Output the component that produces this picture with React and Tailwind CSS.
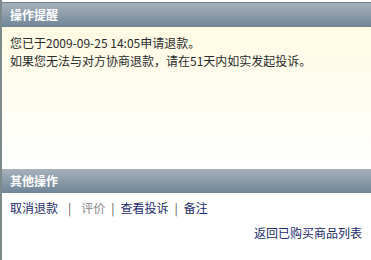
export default function App() {
  const font = { fontFamily: '"Noto Sans CJK SC", "Liberation Sans", sans-serif' };
  return (
    <div className="w-[371px] h-[260px] bg-white border-l-2 border-[#7d8a8c] text-[12px] leading-[16px]" style={font}>
      <div className="pt-[2px]">
        <div className="h-[25px] flex items-center px-[8px] text-white font-bold border-t border-[#6e7c88] bg-gradient-to-b from-[#a7b1bb] to-[#6f8598]">
          操作提醒
        </div>
        <div className="h-[142px] px-[8px] pt-[7px] text-[#2a2a2a] bg-gradient-to-b from-[#fffbe3] via-[#fffdf2] to-white">
          <p className="leading-[18px]">您已于2009-09-25 14:05申请退款。</p>
          <p className="leading-[18px]">如果您无法与对方协商退款，请在51天内如实发起投诉。</p>
        </div>
      </div>
      <div className="h-[24px] flex items-center px-[8px] text-white font-bold bg-gradient-to-b from-[#a7b1bb] to-[#6f8598]">
        其他操作
      </div>
      <div className="px-[8px] pt-[7px] flex items-center gap-[6px] text-[#1d2b6b]">
        <span>取消退款</span>
        <span className="text-[#555] px-[4px]">|</span>
        <span className="text-[#888]">评价</span>
        <span className="text-[#555]">|</span>
        <span>查看投诉</span>
        <span className="text-[#555]">|</span>
        <span>备注</span>
      </div>
      <div className="flex justify-end pr-[9px] pt-[9px] text-[#1d2b6b]">
        <span>返回已购买商品列表</span>
      </div>
    </div>
  );
}
